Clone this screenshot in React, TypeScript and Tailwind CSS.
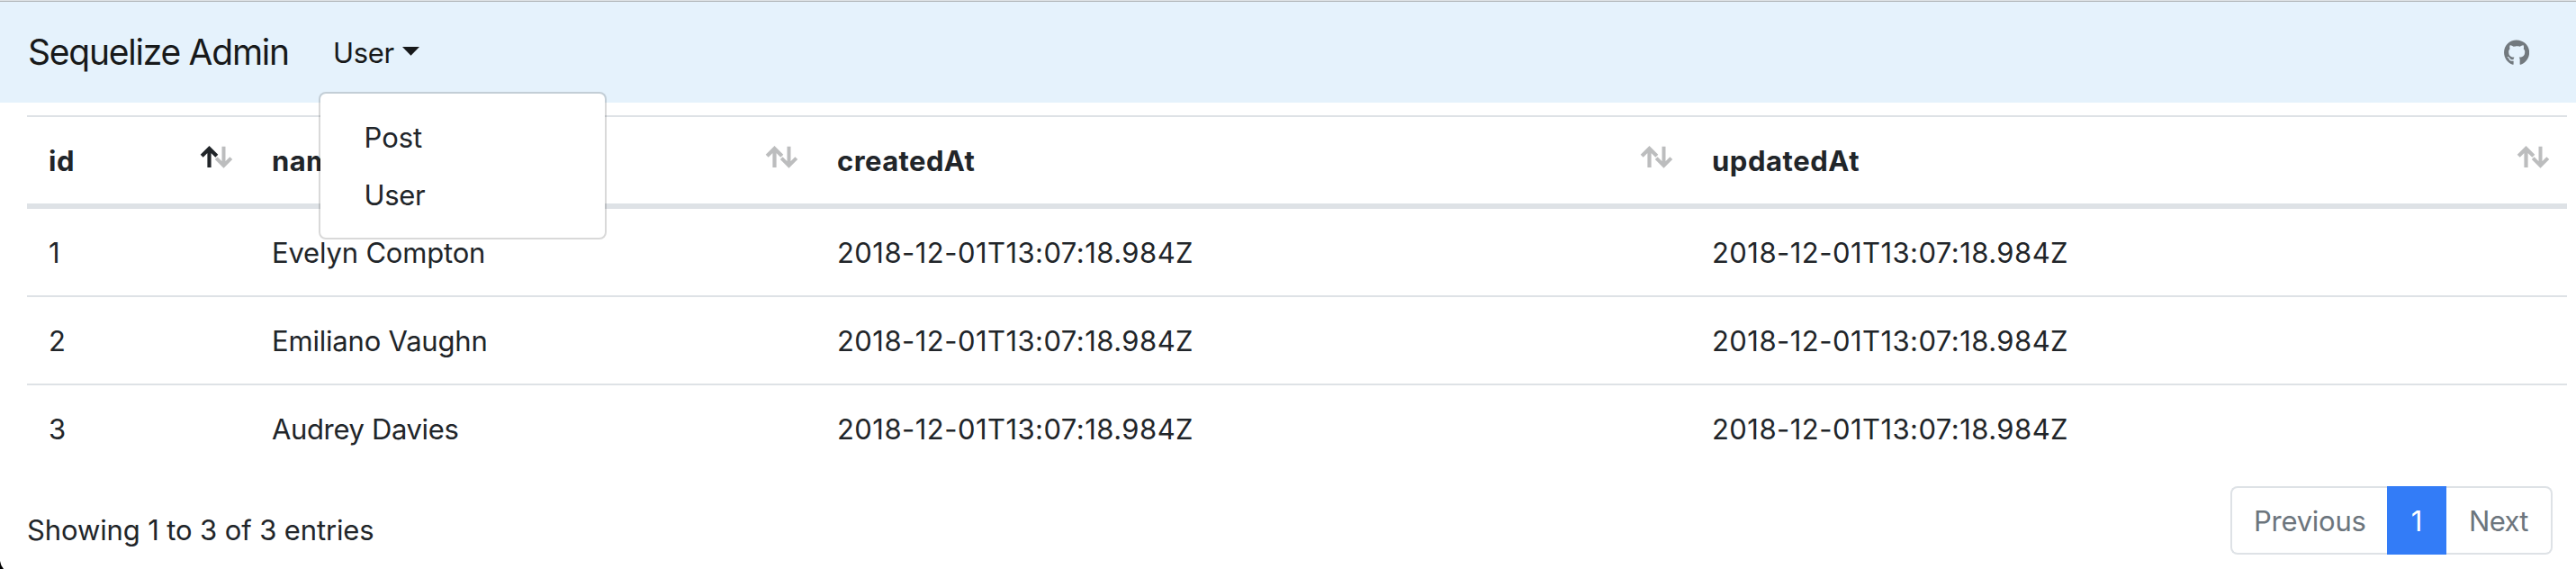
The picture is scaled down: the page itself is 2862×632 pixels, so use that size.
import { FaGithub } from "react-icons/fa";

const people = [
  { id: 1, name: "Evelyn Compton", tracking: "tracking-[-0.18px]" },
  { id: 2, name: "Emiliano Vaughn", tracking: "tracking-[-0.2px]" },
  { id: 3, name: "Audrey Davies", tracking: "tracking-[-0.36px]" },
];

const columns = [
  { label: "id", tracking: "tracking-[0.5px]", sorted: true },
  { label: "name", tracking: "tracking-[0.4px]", sorted: false },
  { label: "createdAt", tracking: "tracking-[0.42px]", sorted: false },
  { label: "updatedAt", tracking: "tracking-[0.55px]", sorted: false },
];

const stamp = "2018-12-01T13:07:18.984Z";
const rowGrid = "grid grid-cols-[248px_628px_972px_974px]";

function SortIcon({ ascending }: { ascending: boolean }) {
  return (
    <svg className="mt-2 mr-[18px] h-[26px] w-[38px]" viewBox="0 0 38 26" fill="none" stroke="#212529">
      <g opacity="0.3" strokeWidth="4">
        <path d="M18.2 13.7l8.3 8.3 8.3-8.3M26.5 .8V22" />
      </g>
      <g opacity={ascending ? 1 : 0.3} strokeWidth="4.2">
        <path d="M2.2 11.3L10.5 3l8.3 8.3M10.5 3v21" />
      </g>
    </svg>
  );
}

function Navbar() {
  return (
    <nav className="flex h-28 items-start bg-[#e5f2fc] pt-[25px] pr-[52px] pl-[31px] text-[#17191a]">
      <a className="w-[339px] text-[39px] leading-[61px] tracking-[-1.24px] whitespace-nowrap">Sequelize Admin</a>
      <div className="relative mt-2">
        <button className="flex h-12 items-start leading-[48px]">
          <span className="w-[76.5px] text-left tracking-[-0.3px]">User</span>
          <svg className="mt-[17px] h-2.5 w-[19px]" viewBox="0 0 19 10" fill="currentColor">
            <path d="M0 0h19L9.5 9.8z" />
          </svg>
        </button>
        <ul className="absolute top-[67px] left-[-16px] z-10 h-[164px] w-80 rounded-lg border-2 border-black/15 bg-white bg-clip-padding pt-[17px] text-[#212529]">
          <li className="h-16 pt-2 pl-[48.5px] leading-[48px]">Post</li>
          <li className="h-16 pt-2 pl-[48.5px] leading-[48px] tracking-[-0.3px]">User</li>
        </ul>
      </div>
      <FaGithub className="mt-[17px] ml-auto h-[29px] w-[28.2px] text-[#72797e]" />
    </nav>
  );
}

export default function App() {
  return (
    <div className="relative h-[632px] overflow-hidden bg-white font-['Inter',sans-serif] text-[31px] leading-[48px] text-[#212529]">
      <div className="h-0.5 border-b border-[#b0b5b8] bg-[#dfe3e5]" />
      <Navbar />
      <main className="pt-3.5 pr-2.5 pl-[30px]">
        <section className="h-[396px]">
          <header className={`${rowGrid} h-[104px] border-t-2 border-b-[6px] border-[#dee2e6] font-bold`}>
            {columns.map((c) => (
              <div key={c.label} className="flex items-start justify-between pt-6 pl-6">
                <span className={`mt-px ${c.tracking}`}>{c.label}</span>
                <SortIcon ascending={c.sorted} />
              </div>
            ))}
          </header>
          {people.map((p) => (
            <div key={p.id} className={`${rowGrid} h-[98px] border-b-2 border-[#dee2e6] pt-[25px] last:border-b-0`}>
              <span className="pl-6">{p.id}</span>
              <span className={`pl-6 ${p.tracking}`}>{p.name}</span>
              <span className="pl-6 tracking-[0.45px]">{stamp}</span>
              <span className="pl-6 tracking-[0.45px]">{stamp}</span>
            </div>
          ))}
        </section>
        <footer className="flex items-start justify-between pt-4 pr-4">
          <p className="pt-[25px] tracking-[-0.12px]">Showing 1 to 3 of 3 entries</p>
          <div className="flex h-[76px] text-[#6c757d]">
            <button className="flex w-[174px] items-start rounded-l-lg border-2 border-r-0 border-[#dee2e6] pt-[13px] pl-6 tracking-[-0.25px]">
              Previous
            </button>
            <button className="flex w-[66px] items-start justify-center bg-[#337cf7] pt-[15px] text-white">1</button>
            <button className="flex w-[118px] items-start rounded-r-lg border-2 border-l-0 border-[#dee2e6] pt-[13px] pl-[25px] tracking-[-0.65px]">
              Next
            </button>
          </div>
        </footer>
      </main>
      <svg className="absolute bottom-0 left-0 h-2.5 w-1.5" viewBox="0 0 6 10">
        <path d="M0 1Q.8 6.5 4 10H0z" fill="#000" />
      </svg>
    </div>
  );
}
